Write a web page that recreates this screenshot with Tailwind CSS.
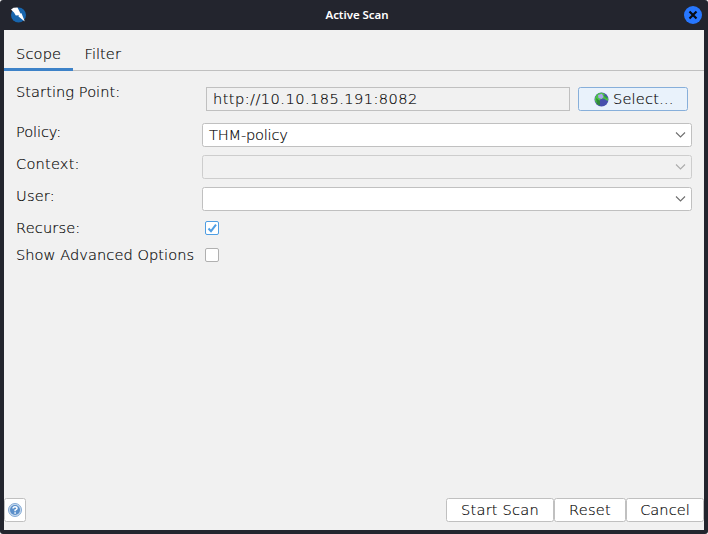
<!DOCTYPE html>
<html lang="en">
<head>
<meta charset="utf-8">
<title>Active Scan</title>
<script src="https://cdn.jsdelivr.net/npm/@tailwindcss/browser@4"></script>
</head>
<body class="bg-white overflow-hidden">
<div class="w-[708px] h-[534px] bg-[#23252e] rounded-[3px] flex flex-col px-1 pb-1 text-black font-['DejaVu_Sans_Light','DejaVu_Sans',sans-serif] font-extralight text-[14.6px] leading-[18px] tracking-[0.05px] [-webkit-text-stroke:0.15px_black] whitespace-nowrap">
  <header class="h-[30px] shrink-0 flex items-center justify-between pl-1.5">
    <svg class="size-4" viewBox="0 0 16 16"><circle cx="8.500" cy="8" r="7.500" fill="#1765ad"/><path d="M1 2.500 3.500.8 7.500.5 10.500 6.500l1-.3L14.800 14.500 8.500 9.500l.3-1.200L5.800 8.500 4 5.500z" fill="#fff"/></svg>
    <h1 class="font-['Noto_Sans',sans-serif] font-semibold text-[11.5px] tracking-[-0.05px] text-white [-webkit-text-stroke:0] pl-1">Active Scan</h1>
    <svg class="w-[18px] h-[18px] mr-0.5" viewBox="0 0 18 18"><circle cx="9" cy="9" r="9" fill="#2777ff"/><path d="M5.500 5.500l7 7M12.500 5.500l-7 7" stroke="#080b12" stroke-width="2.200"/></svg>
  </header>
  <main class="flex-1 bg-[#f1f1f1] flex flex-col">
    <nav class="h-[41px] shrink-0 flex border-b border-[#c0c0c0]">
      <div class="w-[69px] h-[41px] border-b-3 border-[#3d82c8] pl-3 pt-[15px] tracking-[0.15px]">Scope</div>
      <div class="pl-[11.5px] pt-[15px]">Filter</div>
    </nav>
    <section class="flex flex-col pl-3 pr-3">
      <div class="flex h-[52px]">
        <label class="w-[186px] pt-3">Starting Point:</label>
        <div class="flex pt-4 pl-1 gap-2">
          <div class="w-[364px] h-6 border border-[#c0c0c0] pl-1.5 pt-0.5 tracking-[0.45px]">http://10.10.185.191:8082</div>
          <button class="w-[110px] h-6 rounded-[2.5px] border border-[#87afda] bg-[#e9f2fb] flex items-center pl-[15px] gap-1 tracking-[0.18px]">
            <svg class="size-[15px] shrink-0" viewBox="0 0 15 15"><circle cx="7.500" cy="7.500" r="7" fill="#4850ad"/><path d="M1 6Q3 0 9 1l2 1.500-1.500 1L12 5l2 1v3l-2-1-2-1.500L7 7l-2 2 1 3-2 1L1 9z" fill="#4cc545"/><path d="M4 3l4-1.200L9.500 5 7.500 7l-3-1z" fill="#a9a3ec"/><path d="M2 6l4 3 0 4.500-3-1.500z" fill="#328a3b"/><path d="M10.500 3l3 2.500-.5 1.500-3-2z" fill="#35a33b"/></svg>
            <span>Select…</span>
          </button>
        </div>
      </div>
      <div class="flex h-8"><label class="w-[186px] tracking-[-0.1px]">Policy:</label>
        <div class="w-[490px] h-6 border border-[#c0c0c0] rounded-[2.500px] bg-white flex items-center justify-between pl-1.5 pr-[5px]"><span class="tracking-[-0.2px]">THM-policy</span><svg class="w-[11px] h-[6px]" viewBox="0 0 11 6"><path d="M1 .5 5.500 5 10 .5" fill="none" stroke="#6e6e6e" stroke-width="1.100"/></svg></div>
      </div>
      <div class="flex h-8"><label class="w-[186px] tracking-[0.2px]">Context:</label>
        <div class="w-[490px] h-6 border border-[#cdcdcd] rounded-[2.500px] flex items-center justify-end pr-[5px]"><svg class="w-[11px] h-[6px]" viewBox="0 0 11 6"><path d="M1 .5 5.500 5 10 .5" fill="none" stroke="#ababab" stroke-width="1.100"/></svg></div>
      </div>
      <div class="flex h-8"><label class="w-[186px] tracking-[0.2px]">User:</label>
        <div class="w-[490px] h-6 border border-[#c0c0c0] rounded-[2.500px] bg-white flex items-center justify-end pr-[5px]"><svg class="w-[11px] h-[6px]" viewBox="0 0 11 6"><path d="M1 .5 5.500 5 10 .5" fill="none" stroke="#6e6e6e" stroke-width="1.100"/></svg></div>
      </div>
      <div class="flex h-[27px]"><label class="w-[189px] tracking-[0.15px]">Recurse:</label>
        <div class="size-[14px] mt-[2px] border border-[#4f9ee3] rounded-[2px] bg-white"><svg class="size-3" viewBox="0 0 12 12"><path d="M2.500 6.500 5 9.200 10 2.700" fill="none" stroke="#4f9ee3" stroke-width="2"/></svg></div>
      </div>
      <div class="flex h-[27px]"><label class="w-[189px]">Show Advanced Options</label>
        <div class="size-[14px] mt-[2px] border border-[#b0b0b0] rounded-[2px] bg-white"></div>
      </div>
    </section>
    <footer class="mt-auto mb-2 h-6 flex justify-between">
      <button class="w-[22px] h-6 border border-[#c0c0c0] rounded-[2.500px] bg-white flex items-center justify-center"><svg class="size-[14px] shrink-0" viewBox="0 0 14 14"><circle cx="7" cy="7" r="6.500" fill="#c9dbef" stroke="#85abd5"/><circle cx="7" cy="7" r="5" fill="#5a8fca"/><path d="M5 5.500Q5 3.800 7 3.800T9 5.400Q9 6.300 7.100 7.100V8.300M7.100 9.200V10.700" fill="none" stroke="#fff" stroke-width="1.500"/></svg></button>
      <div class="flex">
        <button class="w-[108px] h-6 border border-[#c0c0c0] rounded-[2.500px] bg-white tracking-[0.2px]">Start Scan</button>
        <button class="w-[72px] h-6 border border-[#c0c0c0] rounded-[2.500px] bg-white tracking-[0.2px]">Reset</button>
        <button class="w-[78px] h-6 border border-[#c0c0c0] rounded-[2.500px] bg-white">Cancel</button>
      </div>
    </footer>
  </main>
</div>
</body>
</html>
